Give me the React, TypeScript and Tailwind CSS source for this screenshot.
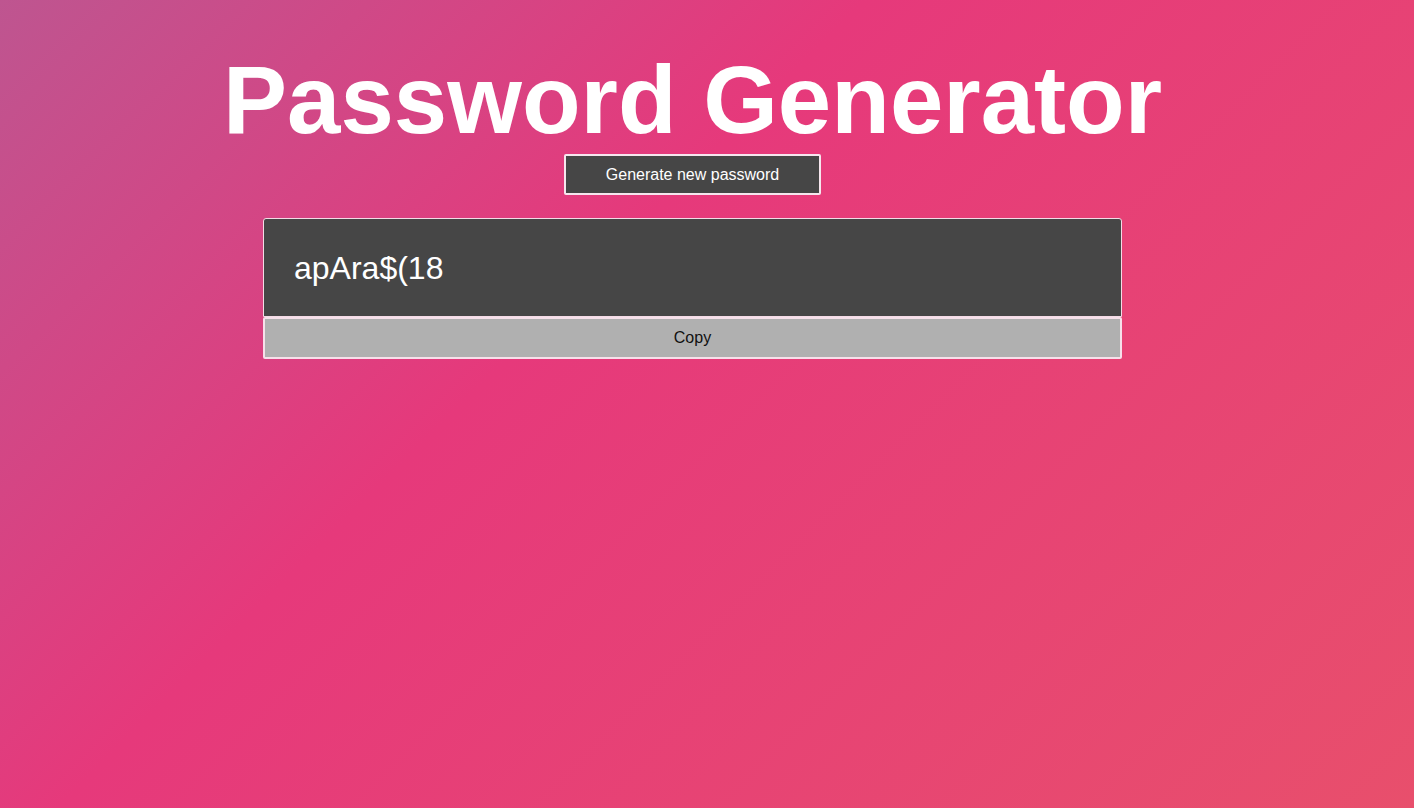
import React from 'react';

export default function App() {
  const password = 'apAra$(18';

  return (
    <div className="min-h-[808px] w-full bg-[linear-gradient(135deg,#be5590_0%,#e6397b_39%,#e84f6c_100%)] font-['Liberation_Sans',Arial,sans-serif]">
      <div className="flex w-[1385px] flex-col items-center pt-[45px]">
        <h1 className="text-[96px] font-bold leading-[110px] text-white">Password Generator</h1>
        <button className="mt-[-1px] h-[41px] w-[257px] rounded-[2px] border-2 border-[#f6e6ee] bg-[#464646] text-[16px] text-white">
          Generate new password
        </button>
        <div className="mt-[23px] flex w-[859px] flex-col">
          <div className="flex h-[99px] items-center rounded-t-[3px] border border-[#f4dbe6] bg-[#464646] px-[30px]">
            <span className="text-[32px] text-white">{password}</span>
          </div>
          <button className="h-[42px] w-full rounded-[2px] border-2 border-[#f6e0ea] bg-[#b0b0b0] text-[16px] text-[#111]">
            Copy
          </button>
        </div>
      </div>
    </div>
  );
}
